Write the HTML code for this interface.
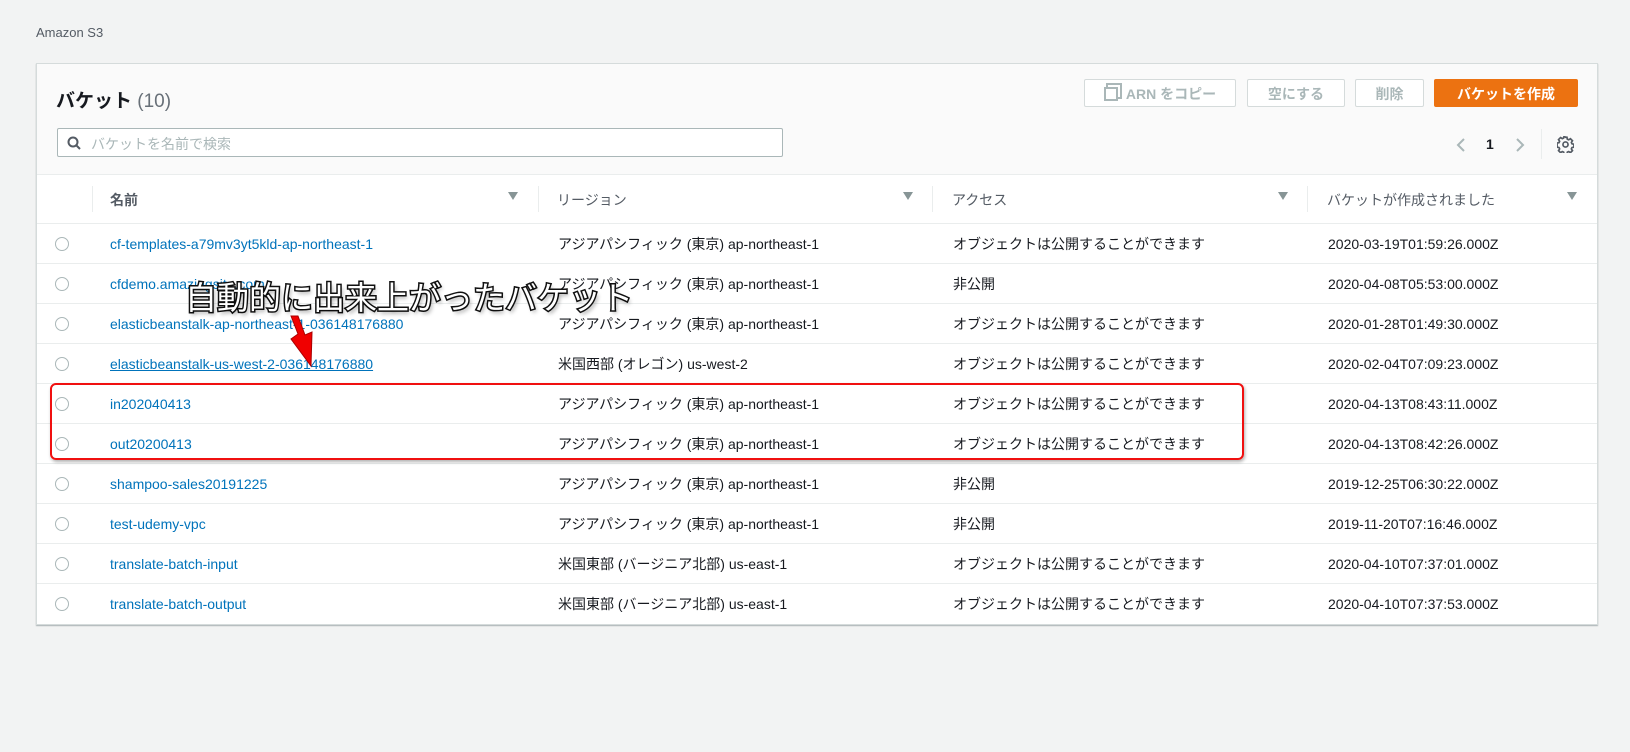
<!DOCTYPE html>
<html><head><meta charset="utf-8"><style>
body{margin:0;width:1630px;height:752px;background:#f2f3f3;font-family:"Liberation Sans","Noto Sans CJK JP",sans-serif;position:relative;overflow:hidden;color:#16191f}
.abs{position:absolute}
.panel{left:36px;top:63px;width:1560px;height:560px;background:#fff;border:1px solid #d5dbdb;box-shadow:0 1px 1px rgba(0,28,36,.3)}
.top{left:0;top:0;width:1560px;height:110px;background:#fafafa;border-bottom:1px solid #eaeded}
.btn{position:absolute;top:15px;height:28px;border:1px solid #d5dbdb;border-radius:2px;background:#fff;color:#aab7b8;font-weight:bold;font-size:14px;line-height:28px;text-align:center;box-sizing:border-box}
.row{position:absolute;left:0;width:1560px;height:40px;border-top:1px solid #eaeded;font-size:14px;line-height:40px}
.row span{position:absolute;white-space:nowrap}
.l{color:#0073bb}
.rad{position:absolute;left:18px;top:13px;width:12px;height:12px;border:1px solid #aab7b8;border-radius:50%}
.th{position:absolute;font-size:14px;color:#545b64;font-weight:bold;top:16px}
.div{position:absolute;top:12px;width:1px;height:26px;background:#eaeded}
.tri{position:absolute;top:18px;width:0;height:0;border-left:5px solid transparent;border-right:5px solid transparent;border-top:8px solid #879596}
</style></head><body>
<div class="abs" style="left:36px;top:25px;font-size:13px;color:#545b64">Amazon S3</div>
<div class="abs panel">
 <div class="abs top">
  <div class="abs" style="left:19px;top:22px;font-size:19px;font-weight:bold">バケット <span style="font-weight:normal;color:#687078">(10)</span></div>
  <div class="abs" style="left:20px;top:64px;width:726px;height:29px;border:1px solid #aab7b8;border-radius:2px;background:#fff;box-sizing:border-box">
   <svg class="abs" style="left:9px;top:7px" width="14" height="14" viewBox="0 0 14 14"><circle cx="6" cy="6" r="4.5" fill="none" stroke="#545b64" stroke-width="2"/><path d="M9.5 9.5 13 13" stroke="#545b64" stroke-width="2"/></svg>
   <span class="abs" style="left:33px;top:5px;font-size:14px;color:#aab7b8">バケットを名前で検索</span>
  </div>
  <div class="btn" style="left:1047px;width:152px"><span style="display:inline-block;width:10px;height:10px;border:2px solid #aab7b8;vertical-align:-2px;margin-right:8px;box-shadow:3px -3px 0 -1px #fff,3px -3px 0 1px #aab7b8"></span>ARN をコピー</div>
  <div class="btn" style="left:1210px;width:98px">空にする</div>
  <div class="btn" style="left:1318px;width:69px">削除</div>
  <div class="btn" style="left:1397px;width:144px;background:#ec7211;border-color:#ec7211;color:#fff">バケットを作成</div>
  <svg class="abs" style="left:1418px;top:73px" width="12" height="16"><path d="M9 2 3 8 9 14" fill="none" stroke="#aab7b8" stroke-width="2"/></svg>
  <div class="abs" style="left:1449px;top:72px;font-size:14px;font-weight:bold">1</div>
  <svg class="abs" style="left:1477px;top:73px" width="12" height="16"><path d="M3 2 9 8 3 14" fill="none" stroke="#aab7b8" stroke-width="2"/></svg>
  <div class="abs" style="left:1504px;top:65px;width:1px;height:30px;background:#eaeded"></div>
  <svg class="abs" style="left:1520px;top:72px" width="17" height="17" viewBox="0 0 20 20"><path d="M10 1.5l1.7 0 .5 2.3 1.6.7 2-1.3 2.4 2.4-1.3 2 .7 1.6 2.3.5v3.4l-2.3.5-.7 1.6 1.3 2-2.4 2.4-2-1.3-1.6.7-.5 2.3H8.3l-.5-2.3-1.6-.7-2 1.3-2.4-2.4 1.3-2-.7-1.6-2.3-.5V8.3l2.3-.5.7-1.6-1.3-2L4.2 1.8l2 1.3 1.6-.7.5-2.3z" fill="none" stroke="#545b64" stroke-width="2"/><circle cx="10" cy="10" r="3" fill="none" stroke="#545b64" stroke-width="2"/></svg>
 </div>
 <div class="abs" style="left:0;top:110px;width:1560px;height:49px">
  <div class="div" style="left:55px"></div>
  <div class="th" style="left:73px">名前</div><div class="tri" style="left:471px"></div>
  <div class="div" style="left:501px"></div>
  <div class="th" style="left:520px;font-weight:normal">リージョン</div><div class="tri" style="left:866px"></div>
  <div class="div" style="left:895px"></div>
  <div class="th" style="left:915px;font-weight:normal">アクセス</div><div class="tri" style="left:1241px"></div>
  <div class="div" style="left:1270px"></div>
  <div class="th" style="left:1290px;font-weight:normal">バケットが作成されました</div><div class="tri" style="left:1530px"></div>
 </div>
 <div class="row" style="top:159px"><i class="rad"></i><span class="l" style="left:73px">cf-templates-a79mv3yt5kld-ap-northeast-1</span><span style="left:521px">アジアパシフィック (東京) ap-northeast-1</span><span style="left:916px">オブジェクトは公開することができます</span><span style="left:1291px">2020-03-19T01:59:26.000Z</span></div>
 <div class="row" style="top:199px"><i class="rad"></i><span class="l" style="left:73px">cfdemo.amazingsite.com</span><span style="left:521px">アジアパシフィック (東京) ap-northeast-1</span><span style="left:916px">非公開</span><span style="left:1291px">2020-04-08T05:53:00.000Z</span></div>
 <div class="row" style="top:239px"><i class="rad"></i><span class="l" style="left:73px">elasticbeanstalk-ap-northeast-1-036148176880</span><span style="left:521px">アジアパシフィック (東京) ap-northeast-1</span><span style="left:916px">オブジェクトは公開することができます</span><span style="left:1291px">2020-01-28T01:49:30.000Z</span></div>
 <div class="row" style="top:279px"><i class="rad"></i><span class="l" style="left:73px;text-decoration:underline">elasticbeanstalk-us-west-2-036148176880</span><span style="left:521px">米国西部 (オレゴン) us-west-2</span><span style="left:916px">オブジェクトは公開することができます</span><span style="left:1291px">2020-02-04T07:09:23.000Z</span></div>
 <div class="row" style="top:319px"><i class="rad"></i><span class="l" style="left:73px">in202040413</span><span style="left:521px">アジアパシフィック (東京) ap-northeast-1</span><span style="left:916px">オブジェクトは公開することができます</span><span style="left:1291px">2020-04-13T08:43:11.000Z</span></div>
 <div class="row" style="top:359px"><i class="rad"></i><span class="l" style="left:73px">out20200413</span><span style="left:521px">アジアパシフィック (東京) ap-northeast-1</span><span style="left:916px">オブジェクトは公開することができます</span><span style="left:1291px">2020-04-13T08:42:26.000Z</span></div>
 <div class="row" style="top:399px"><i class="rad"></i><span class="l" style="left:73px">shampoo-sales20191225</span><span style="left:521px">アジアパシフィック (東京) ap-northeast-1</span><span style="left:916px">非公開</span><span style="left:1291px">2019-12-25T06:30:22.000Z</span></div>
 <div class="row" style="top:439px"><i class="rad"></i><span class="l" style="left:73px">test-udemy-vpc</span><span style="left:521px">アジアパシフィック (東京) ap-northeast-1</span><span style="left:916px">非公開</span><span style="left:1291px">2019-11-20T07:16:46.000Z</span></div>
 <div class="row" style="top:479px"><i class="rad"></i><span class="l" style="left:73px">translate-batch-input</span><span style="left:521px">米国東部 (バージニア北部) us-east-1</span><span style="left:916px">オブジェクトは公開することができます</span><span style="left:1291px">2020-04-10T07:37:01.000Z</span></div>
 <div class="row" style="top:519px"><i class="rad"></i><span class="l" style="left:73px">translate-batch-output</span><span style="left:521px">米国東部 (バージニア北部) us-east-1</span><span style="left:916px">オブジェクトは公開することができます</span><span style="left:1291px">2020-04-10T07:37:53.000Z</span></div>
</div>
<div class="abs" style="left:50px;top:383px;width:1190px;height:73px;border:2px solid #f01010;border-radius:6px;box-shadow:1px 2px 3px rgba(0,0,0,.3)"></div>
<div class="abs" style="left:185px;top:276px;font-size:32px;line-height:40px;color:#fff;font-family:'Noto Sans CJK JP',sans-serif;-webkit-text-stroke:3px #111;paint-order:stroke fill;text-shadow:2px 3px 4px rgba(0,0,0,.4)">自動的に出来上がったバケット</div>
<svg class="abs" style="left:285px;top:314px" width="40" height="60"><path d="M6 2 L13 20 L6 25 L26 52 L27 18 L20 21 L13 2 Z" fill="#f00000" stroke="#a00" stroke-width="1"/></svg>
</body></html>
